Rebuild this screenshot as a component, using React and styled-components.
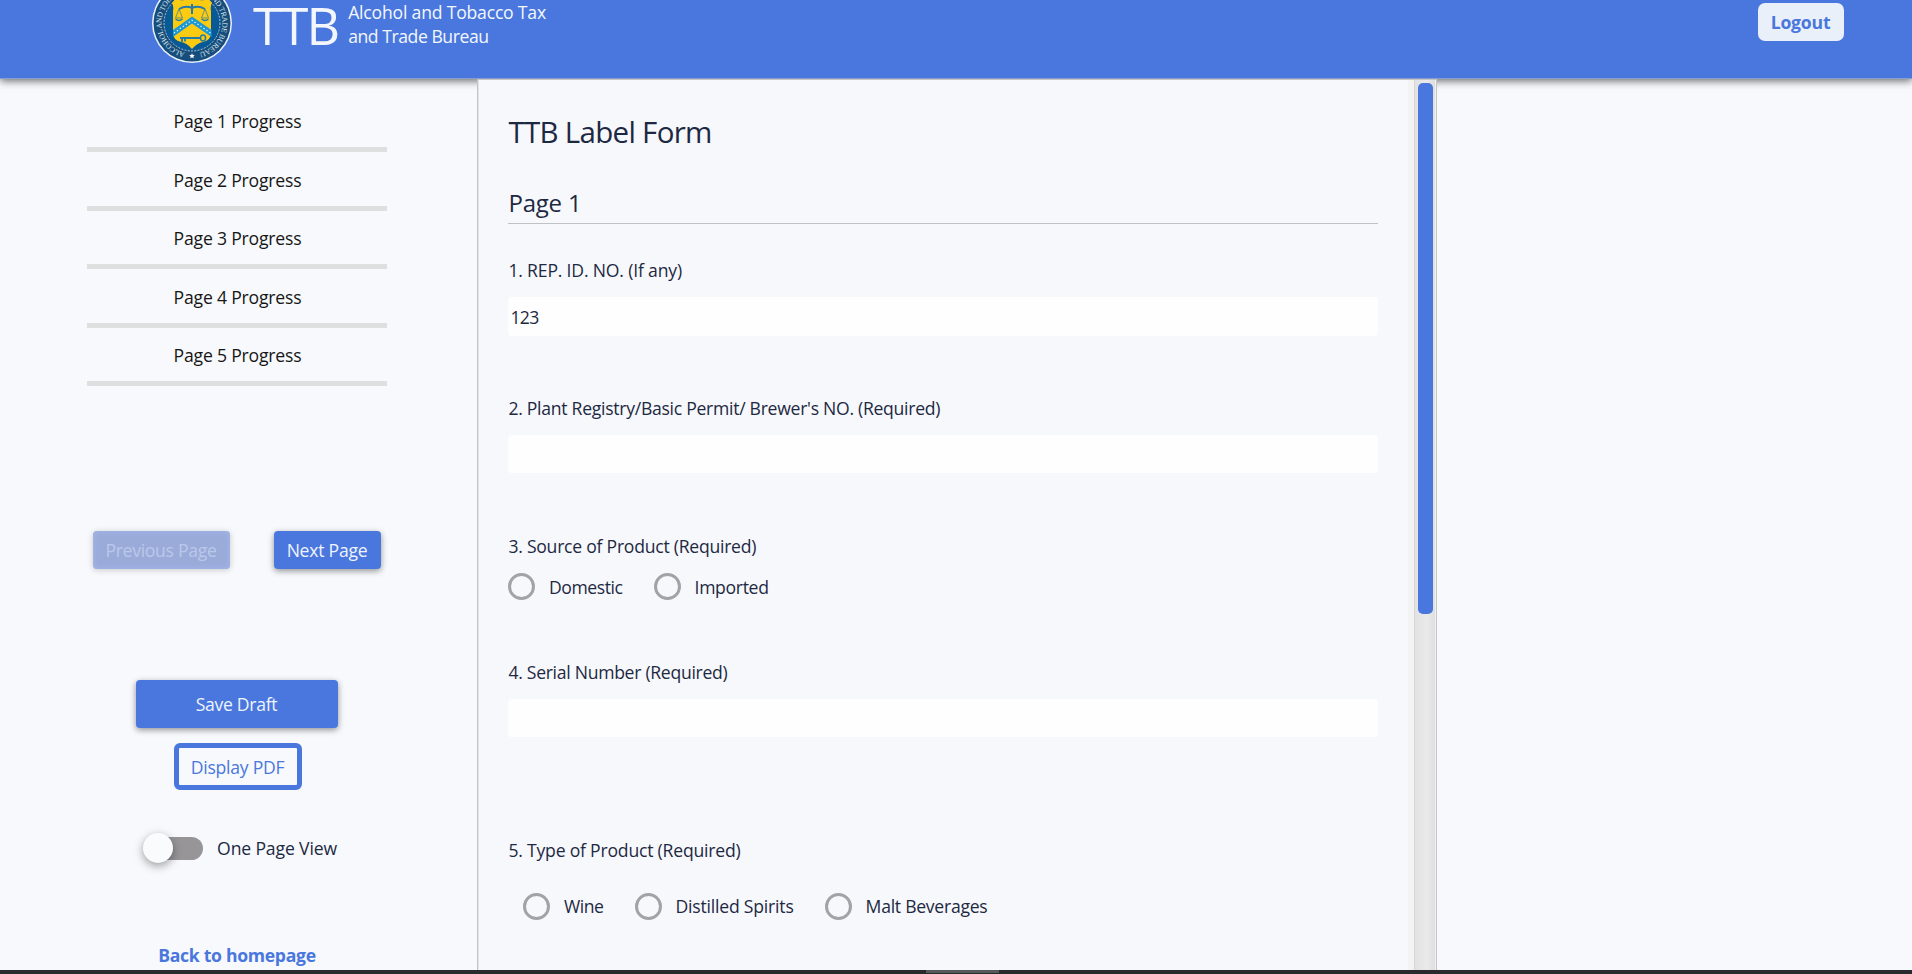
import React from "react";
import styled, { createGlobalStyle } from "styled-components";

const blue = "#4a77dd";
const ink = "#1d2942";

const GlobalStyle = createGlobalStyle`
  *, *::before, *::after { box-sizing: border-box; }
  html, body { margin: 0; padding: 0; }
  body {
    background: #f7f9fc;
    color: ${ink};
    font-family: "Open Sans", "Noto Sans", sans-serif;
    font-size: 17.6px;
    line-height: 24px;
    overflow: hidden;
  }
`;

const Page = styled.div`
  display: flex;
  flex-direction: column;
  width: 1912px;
  height: 974px;
  overflow: hidden;
`;

const Header = styled.header`
  display: flex;
  align-items: flex-start;
  flex: none;
  height: 79px;
  padding: 0 68px 0 151px;
  background: ${blue};
  border-bottom: 1px solid #889dce;
  box-shadow: 0 2px 8px rgba(0, 0, 0, 0.58);
  color: #f3f7fd;
`;

const Seal = styled.svg`
  flex: none;
  width: 82px;
  height: 82px;
  margin-top: -18px;
`;

const Acronym = styled.div`
  margin-left: 20px;
  font-size: 52px;
  line-height: 50px;
  letter-spacing: -1.9px;
  white-space: nowrap;
`;

const Bureau = styled.div`
  display: flex;
  flex-direction: column;
  flex: 1;
  margin-left: 10px;
`;

const Text = styled.span`
  letter-spacing: ${(p) => p.$track ?? -0.25}px;
  white-space: nowrap;
`;

const LogoutButton = styled.button`
  width: 86px;
  height: 38px;
  margin-top: 3px;
  padding: 0 1px 0 0;
  border: 0;
  border-radius: 7px;
  background: #e9f0f9;
  color: ${blue};
  font: inherit;
  font-weight: 700;
`;

const Main = styled.main`
  display: grid;
  grid-template-columns: 477px 960px 1fr;
  flex: 1;
  min-height: 0;
`;

const Sidebar = styled.aside`
  display: flex;
  flex-direction: column;
  align-items: center;
  padding: 30px 90px 0 87px;
`;

const ProgressItem = styled.div`
  width: 300px;
  height: 58.5px;
  padding-left: 1px;
  color: #161616;
  text-align: center;
`;

const ProgressTrack = styled.div`
  height: 5px;
  margin: 14px 0 0 -1px;
  background: #dedfdf;
`;

const PageButtons = styled.div`
  display: flex;
  justify-content: space-between;
  width: 288px;
  margin-top: 129.5px;
`;

const Button = styled.button`
  width: ${(p) => p.$width}px;
  height: ${(p) => p.$height ?? 38}px;
  padding: 0 1px 0 0;
  border: 0;
  border-radius: 4px;
  background: ${blue};
  box-shadow: 0 2px 6px rgba(0, 0, 0, 0.42);
  color: #eef4fd;
  font: inherit;

  &:disabled {
    background: #9aabda;
    box-shadow: inset 0 0 6px #a5b8ea, 0 1px 6px rgba(0, 0, 0, 0.2);
    color: #bac8e9;
  }
`;

const SaveButton = styled(Button)`
  margin-top: 111px;
`;

const OutlineButton = styled.button`
  width: 128px;
  height: 47px;
  margin: 15px 0 0 1px;
  padding: 0;
  border: 5px solid ${blue};
  border-radius: 6px;
  background: #f7f9fc;
  color: ${blue};
  font: inherit;
`;

const SwitchRow = styled.label`
  display: flex;
  align-items: center;
  height: 30px;
  margin-top: 43px;
  padding-left: 6px;
`;

const SwitchTrack = styled.span`
  display: flex;
  align-items: center;
  width: 60px;
  height: 23px;
  margin-right: 14px;
  border-radius: 12px;
  background: linear-gradient(90deg, transparent 20px, #989598 20px);
`;

const SwitchKnob = styled.span`
  flex: none;
  width: 30px;
  height: 30px;
  border-radius: 50%;
  background: #fafbfc;
  box-shadow: 0 3px 10px rgba(0, 0, 0, 0.38);
`;

const HomeLink = styled.a`
  margin-top: 80px;
  color: ${blue};
  font-weight: 700;
`;

const Panel = styled.section`
  display: flex;
  position: relative;
  z-index: 1;
  min-height: 0;
  border: 1px solid #c4c5c4;
  border-bottom: 0;
  background: #f7f8fc;
  box-shadow: inset 1px 0 #e3e4e1;
  overflow: hidden;
`;

const Form = styled.form`
  display: flex;
  flex-direction: column;
  width: 901px;
  padding: 32px 0 0 30.4px;
`;

const Title = styled.h1`
  margin: 0;
  font-size: 29.5px;
  font-weight: 400;
  line-height: 40px;
`;

const Section = styled.h2`
  width: 870px;
  height: 37px;
  margin: 35px 0 0;
  border-bottom: 1px solid #bfc1c3;
  font-size: 24px;
  font-weight: 400;
  line-height: 32px;
`;

const Field = styled.div`
  display: flex;
  flex-direction: column;
  margin-top: ${(p) => p.$gap}px;
`;

const Input = styled.input`
  width: 870px;
  height: ${(p) => p.$height ?? 38}px;
  margin-top: 15px;
  padding: 1px 2px 0;
  border: 0;
  border-radius: 4px;
  background: #fefefe;
  color: ${ink};
  font: inherit;
  letter-spacing: -0.6px;
`;

const Options = styled.div`
  display: flex;
  gap: 31.5px;
  margin-top: ${(p) => p.$gap}px;
  padding-left: ${(p) => p.$indent ?? 0}px;
`;

const Option = styled.label`
  display: flex;
  align-items: center;
  gap: 13.5px;
  height: 27px;
`;

const Radio = styled.span`
  width: 27px;
  height: 27px;
  border: 3px solid #a2a3a4;
  border-radius: 50%;
`;

const Gutter = styled.div`
  width: 6px;
  margin-left: 29px;
  background: #f3f3f4;
`;

const Scrollbar = styled.div`
  width: 22px;
  padding: 3px 2px 0 3px;
  border-left: 1px solid #d5d7d5;
  border-right: 1px solid #f2f2f2;
  background: linear-gradient(90deg, #e2e2e2, #eaeaea 60%, #dedede);
`;

const Thumb = styled.div`
  width: 15px;
  height: 531px;
  border-radius: 5px;
  background: ${blue};
`;

const BottomEdge = styled.footer`
  display: flex;
  justify-content: center;
  flex: none;
  height: 4px;
  padding-left: 13px;
  background: #292a2d;
  position: relative;
  z-index: 2;
`;

const EdgeHandle = styled.div`
  width: 73px;
  height: 3px;
  background: #57585b;
`;

function TreasurySeal() {
  return (
    <Seal viewBox="0 0 82 82" aria-label="Treasury seal">
      <defs>
        <path id="ring" d="M41 71.5a30.5 30.5 0 0 1 0-61a30.5 30.5 0 0 1 0 61" />
      </defs>
      <circle cx="41" cy="41" r="40" fill="#eaf2f6" />
      <circle cx="41" cy="41" r="38.5" fill="#164d7c" />
      <circle cx="41" cy="41" r="28" fill="#075a96" stroke="#d5e2ea" strokeWidth="0.8" strokeDasharray="2 1.3" />
      <text fill="#dce6ec" fontSize="7.6" fontFamily="Liberation Serif, serif">
        <textPath href="#ring" startOffset="7" textLength="177" lengthAdjust="spacing">
          ALCOHOL AND TOBACCO TAX AND TRADE BUREAU
        </textPath>
      </text>
      <path d="M41 71.2l.8 1.8 2 .1-1.5 1.3.5 2-1.8-1.1-1.8 1.1.5-2-1.5-1.3 2-.1z" fill="#fff" />
      <path d="M25 16q4 3 8 2q5 0 8-2q3 2 8 2q4 1 8-2l4 5q-2 3-1 8v22q0 7-8 9q-6 1-11 7q-5-6-11-7q-8-2-8-9V29q1-5-1-8z" fill="#fbcb12" />
      <path d="M22 48L41 34.5 60.5 48v7L41 41.5 22 55z" fill="#1d98d3" />
      <path d="M23 51L41 38.2 59.5 51" fill="none" stroke="#e7f3f5" strokeWidth="1.3" strokeDasharray="1.3 2.3" />
      <g fill="none" stroke="#277ca6" strokeWidth="1.3">
        <path d="M28 27q7-4 13-1q6-3 13 1M41 22v10" strokeWidth="2" />
        <path d="M28 27l-3.5 9h7zM54 27l-3.5 9h7z" strokeWidth="0.7" />
        <path d="M24.5 37q3.5 3 7 0M50.5 37q3.5 3 7 0" />
        <path d="M29 56h21M31 56v4M34 56v3.5" strokeWidth="1.8" />
        <ellipse cx="52" cy="56" rx="2.5" ry="3" strokeWidth="1.5" />
      </g>
    </Seal>
  );
}

function Choice({ children, track }) {
  return (
    <Option>
      <Radio />
      <Text $track={track}>{children}</Text>
    </Option>
  );
}

export default function App() {
  return (
    <>
      <GlobalStyle />
      <Page>
        <Header>
          <TreasurySeal />
          <Acronym>TTB</Acronym>
          <Bureau>
            <Text $track={-0.2}>Alcohol and Tobacco Tax</Text>
            <Text $track={-0.45}>and Trade Bureau</Text>
          </Bureau>
          <LogoutButton><Text $track={-0.2}>Logout</Text></LogoutButton>
        </Header>
        <Main>
          <Sidebar>
            {[1, 2, 3, 4, 5].map((n) => (
              <ProgressItem key={n}>
                <Text $track={-0.2}>Page {n} Progress</Text>
                <ProgressTrack />
              </ProgressItem>
            ))}
            <PageButtons>
              <Button $width={137} disabled><Text $track={-0.3}>Previous Page</Text></Button>
              <Button $width={107}><Text>Next Page</Text></Button>
            </PageButtons>
            <SaveButton $width={202} $height={48}><Text $track={-0.3}>Save Draft</Text></SaveButton>
            <OutlineButton><Text>Display PDF</Text></OutlineButton>
            <SwitchRow>
              <SwitchTrack><SwitchKnob /></SwitchTrack>
              <Text $track={-0.15}>One Page View</Text>
            </SwitchRow>
            <HomeLink><Text $track={-0.3}>Back to homepage</Text></HomeLink>
          </Sidebar>
          <Panel>
            <Form>
              <Title><Text $track={-0.7}>TTB Label Form</Text></Title>
              <Section><Text $track={-0.2}>Page 1</Text></Section>
              <Field $gap={34}>
                <Text $track={-0.18}>1. REP. ID. NO. (If any)</Text>
                <Input $height={39} defaultValue="123" />
              </Field>
              <Field $gap={60}>
                <Text $track={-0.28}>2. Plant Registry/Basic Permit/ Brewer's NO. (Required)</Text>
                <Input />
              </Field>
              <Field $gap={61}>
                <Text>3. Source of Product (Required)</Text>
                <Options $gap={15}>
                  <Choice track={-0.42}>Domestic</Choice>
                  <Choice track={-0.33}>Imported</Choice>
                </Options>
              </Field>
              <Field $gap={60}>
                <Text $track={-0.29}>4. Serial Number (Required)</Text>
                <Input />
              </Field>
              <Field $gap={101}>
                <Text $track={-0.21}>5. Type of Product (Required)</Text>
                <Options $gap={30.5} $indent={15}>
                  <Choice track={-0.45}>Wine</Choice>
                  <Choice track={-0.2}>Distilled Spirits</Choice>
                  <Choice track={-0.27}>Malt Beverages</Choice>
                </Options>
              </Field>
            </Form>
            <Gutter />
            <Scrollbar><Thumb /></Scrollbar>
          </Panel>
        </Main>
        <BottomEdge><EdgeHandle /></BottomEdge>
      </Page>
    </>
  );
}
